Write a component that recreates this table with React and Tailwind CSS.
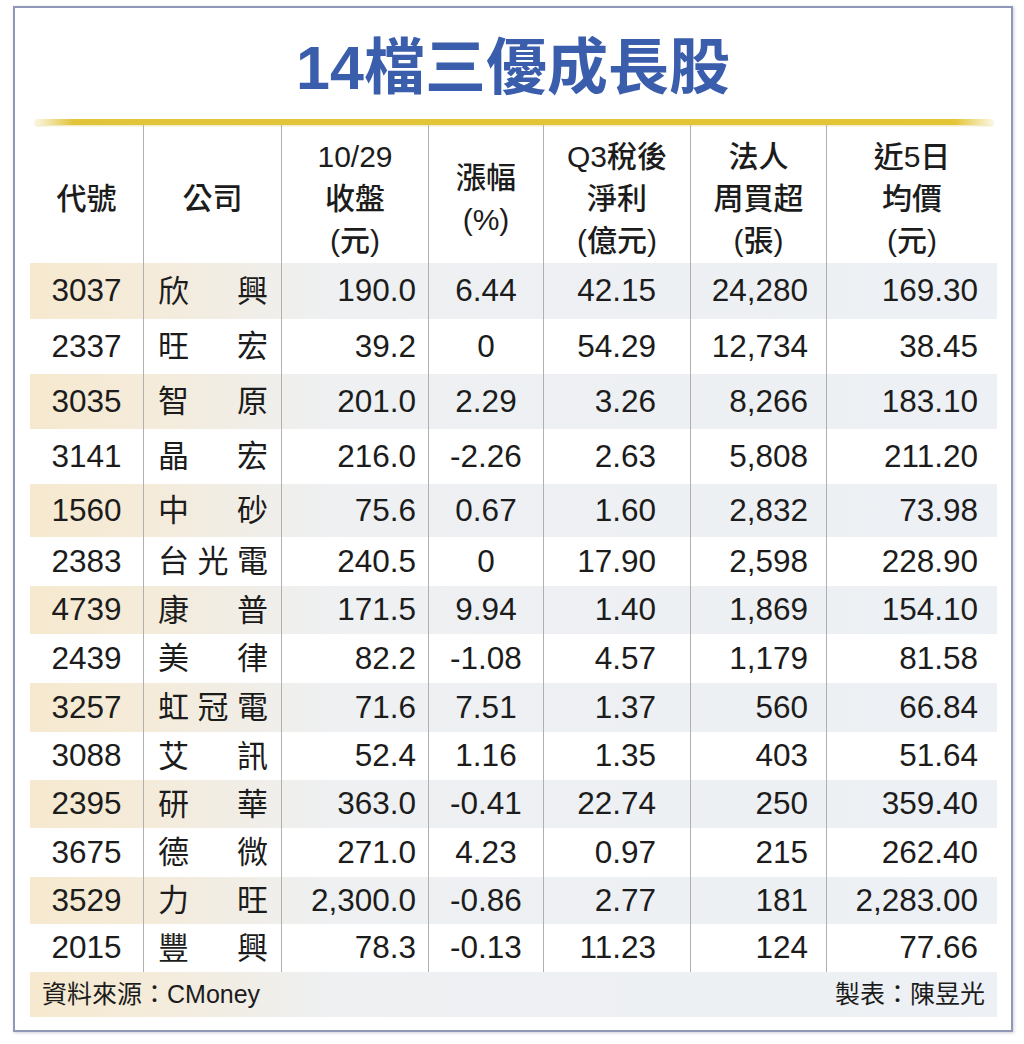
import React from "react";

const rows = [
  ["3037", "欣興", "190.0", "6.44", "42.15", "24,280", "169.30"],
  ["2337", "旺宏", "39.2", "0", "54.29", "12,734", "38.45"],
  ["3035", "智原", "201.0", "2.29", "3.26", "8,266", "183.10"],
  ["3141", "晶宏", "216.0", "-2.26", "2.63", "5,808", "211.20"],
  ["1560", "中砂", "75.6", "0.67", "1.60", "2,832", "73.98"],
  ["2383", "台光電", "240.5", "0", "17.90", "2,598", "228.90"],
  ["4739", "康普", "171.5", "9.94", "1.40", "1,869", "154.10"],
  ["2439", "美律", "82.2", "-1.08", "4.57", "1,179", "81.58"],
  ["3257", "虹冠電", "71.6", "7.51", "1.37", "560", "66.84"],
  ["3088", "艾訊", "52.4", "1.16", "1.35", "403", "51.64"],
  ["2395", "研華", "363.0", "-0.41", "22.74", "250", "359.40"],
  ["3675", "德微", "271.0", "4.23", "0.97", "215", "262.40"],
  ["3529", "力旺", "2,300.0", "-0.86", "2.77", "181", "2,283.00"],
  ["2015", "豐興", "78.3", "-0.13", "11.23", "124", "77.66"],
];

const heights = [
  "h-[56px]", "h-[55px]", "h-[55px]", "h-[55px]", "h-[53px]", "h-[49px]", "h-[48px]",
  "h-[49px]", "h-[49px]", "h-[48px]", "h-[48px]", "h-[49px]", "h-[47px]", "h-[48px]",
];

const grid = "grid grid-cols-[113px_138px_147px_115px_147px_136px_171px]";
const line = "border-l border-[#b0b0b0]";
const band =
  "bg-[linear-gradient(90deg,#f6e9cf_0px,#f4ebda_120px,#eef0f2_300px,#edf0f4_100%)]";

function HeadCell({ lines, first }) {
  return (
    <div
      className={`flex flex-col items-center justify-center pt-[10px] leading-[42px] text-[30px] font-medium ${
        first ? "" : line
      }`}
    >
      {lines.map((l, i) => (
        <div key={i}>{l}</div>
      ))}
    </div>
  );
}

export default function App() {
  return (
    <div className="w-[1024px] h-[1044px] bg-white pt-[6px] pl-[13px] font-['Liberation_Sans','Noto_Sans_CJK_TC',sans-serif] text-[#1c1c1c]">
      <div className="w-[1000px] h-[1026px] border-2 border-[#9098b8] shadow-[1px_1px_3px_rgba(60,70,110,0.25)] flex flex-col">
        <div className="h-[111px] pt-[9px] flex items-center justify-center">
          <div className="text-[61px] font-bold text-[#3a5eab] leading-none">
            14檔三優成長股
          </div>
        </div>
        <div className="ml-[20px] mr-[18px] h-[6px] rounded-full bg-[linear-gradient(90deg,rgba(226,196,58,0.15)_0%,#e2c43a_4%,#e4c535_96%,rgba(226,196,58,0.15)_100%)] shadow-[0_1px_2px_rgba(200,170,40,0.35)]" />
        <div className="ml-[15px] w-[967px]">
          <div className={`${grid} h-[138px]`}>
            <HeadCell first lines={["代號"]} />
            <HeadCell lines={["公司"]} />
            <HeadCell lines={["10/29", "收盤", "(元)"]} />
            <HeadCell lines={["漲幅", "(%)"]} />
            <HeadCell lines={["Q3稅後", "淨利", "(億元)"]} />
            <HeadCell lines={["法人", "周買超", "(張)"]} />
            <HeadCell lines={["近5日", "均價", "(元)"]} />
          </div>
          {rows.map((r, i) => (
            <div
              key={r[0]}
              className={`${grid} ${heights[i]} text-[31.5px] leading-none ${
                i % 2 === 0 ? band : ""
              }`}
            >
              <div className="flex items-center justify-center">{r[0]}</div>
              <div className={`${line} flex items-center justify-between pl-[14px] pr-[13px] text-[31px]`}>
                {r[1].split("").map((c, j) => (
                  <span key={j}>{c}</span>
                ))}
              </div>
              <div className={`${line} flex items-center justify-end pr-[12px]`}>{r[2]}</div>
              <div className={`${line} flex items-center justify-center`}>{r[3]}</div>
              <div className={`${line} flex items-center justify-end pr-[34px]`}>{r[4]}</div>
              <div className={`${line} flex items-center justify-end pr-[18px]`}>{r[5]}</div>
              <div className={`${line} flex items-center justify-end pr-[19px]`}>{r[6]}</div>
            </div>
          ))}
          <div className={`h-[45px] ${band} flex items-center justify-between px-[12px] text-[25px]`}>
            <span>資料來源：CMoney</span>
            <span>製表：陳昱光</span>
          </div>
        </div>
      </div>
    </div>
  );
}
